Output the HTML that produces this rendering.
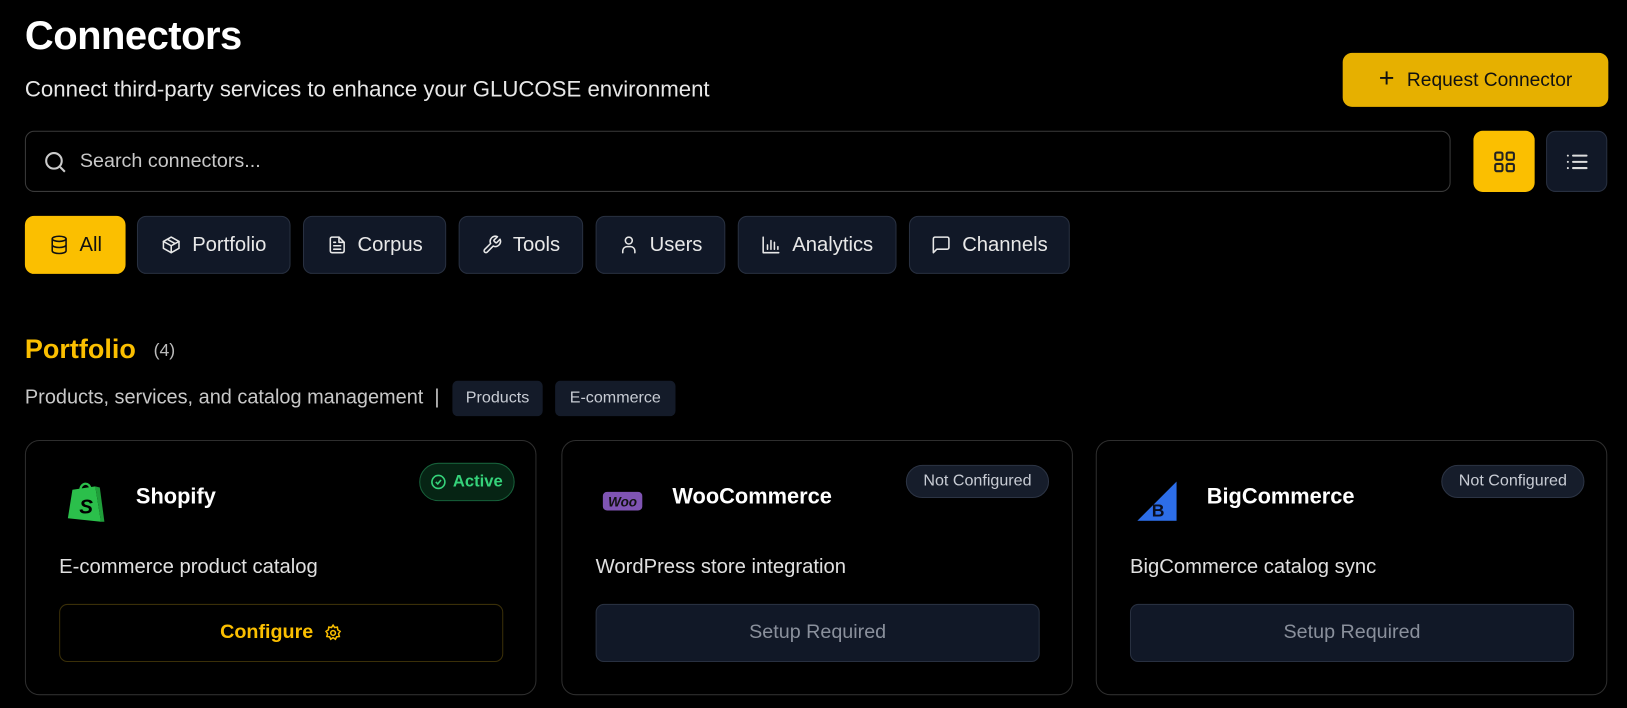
<!DOCTYPE html>
<html><head><meta charset="utf-8"><style>
*{box-sizing:border-box;margin:0;padding:0}
html,body{width:1627px;height:708px;background:#000;overflow:hidden}
body{color:#fff;font-family:"Liberation Sans",sans-serif;position:relative}
#w{position:absolute;left:0;top:0;width:1568px;height:682px;transform:scale(1.03763);transform-origin:0 0}
.a{position:absolute}
h1{position:absolute;left:24px;top:13px;font-size:38.5px;font-weight:700;letter-spacing:-0.5px}
.sub{left:24px;top:74px;font-size:21.4px;color:#e8e8e8}
.req{left:1294px;top:51px;width:256px;height:52px;background:#e6b000;border-radius:9px;color:#111;font-size:18.5px;display:flex;align-items:center;justify-content:center;gap:12px}
.search{left:24px;top:126px;width:1374px;height:59px;border:1px solid #3a3a3a;border-radius:9px;display:flex;align-items:center;padding-left:16px;gap:12px;color:#c8c8c8;font-size:19px}
.vb{top:126px;width:59px;height:59px;border-radius:9px;display:flex;align-items:center;justify-content:center}
.pill{top:208px;height:56px;border-radius:9px;background:#111827;border:1px solid #283040;display:flex;align-items:center;justify-content:center;gap:10px;font-size:19.5px;color:#e8e8e8}
.pill svg{width:20px;height:20px;fill:none;stroke:currentColor;stroke-width:1.8;stroke-linecap:round;stroke-linejoin:round}
.tag{top:367px;height:34px;background:#141b29;border-radius:5px;color:#c8ccd4;font-size:15.5px;display:flex;align-items:center;justify-content:center}
.card{top:424px;width:493px;height:246px;border:1px solid #2e2e2e;border-radius:14px}
.name{left:106px;top:42px;font-size:21px;font-weight:700}
.desc{left:32px;top:110px;font-size:19.5px;color:#e0e0e0}
.btn{left:32px;top:157px;width:428px;height:56px;border-radius:8px;display:flex;align-items:center;justify-content:center;font-size:19px}
.nc{top:23px;height:32px;border-radius:16px;background:#161d2b;border:1px solid #2c3444;color:#c8ccd4;font-size:15.5px;display:flex;align-items:center;justify-content:center}
</style></head><body><div id="w">
<h1>Connectors</h1>
<div class="a sub">Connect third-party services to enhance your GLUCOSE environment</div>
<div class="a req"><span style="font-size:26px;font-weight:300;margin-top:-3px">+</span>Request Connector</div>
<div class="a search"><svg width="24" height="24" viewBox="0 0 24 24" fill="none" stroke="#ccc" stroke-width="2"><circle cx="11" cy="11" r="7.5"/><path d="M17 17l4.5 4.5"/></svg>Search connectors...</div>
<div class="a vb" style="left:1420px;background:#fbbf00"><svg width="24" height="24" viewBox="0 0 24 24" fill="none" stroke="#222" stroke-width="2"><rect x="3" y="3" width="7" height="7" rx="1.5"/><rect x="14" y="3" width="7" height="7" rx="1.5"/><rect x="3" y="14" width="7" height="7" rx="1.5"/><rect x="14" y="14" width="7" height="7" rx="1.5"/></svg></div>
<div class="a vb" style="left:1490px;background:#111827;border:1px solid #283040"><svg width="24" height="24" viewBox="0 0 24 24" fill="none" stroke="#ddd" stroke-width="2" stroke-linecap="round"><path d="M8 6h13M8 12h13M8 18h13M3 6h.01M3 12h.01M3 18h.01"/></svg></div>

<div class="a pill" style="left:24px;width:97px;background:#fbbf00;border-color:#fbbf00;color:#111"><svg viewBox="0 0 24 24"><ellipse cx="12" cy="5" rx="8" ry="3"/><path d="M4 5v14c0 1.7 3.6 3 8 3s8-1.3 8-3V5M4 12c0 1.7 3.6 3 8 3s8-1.3 8-3"/></svg>All</div>
<div class="a pill" style="left:132px;width:148px"><svg viewBox="0 0 24 24"><path d="M21 8l-9-5-9 5v8l9 5 9-5z"/><path d="M3 8l9 5 9-5M12 13v8M7.5 5.5l9 5"/></svg>Portfolio</div>
<div class="a pill" style="left:292px;width:138px"><svg viewBox="0 0 24 24"><path d="M14 3H6a2 2 0 0 0-2 2v14a2 2 0 0 0 2 2h12a2 2 0 0 0 2-2V9z"/><path d="M14 3v6h6M8 13h8M8 17h8M8 9h2"/></svg>Corpus</div>
<div class="a pill" style="left:442px;width:120px"><svg viewBox="0 0 24 24"><path d="M14.7 6.3a1 1 0 0 0 0 1.4l1.6 1.6a1 1 0 0 0 1.4 0l3.8-3.8a6 6 0 0 1-7.9 7.9l-6.9 6.9a2.1 2.1 0 0 1-3-3l6.9-6.9a6 6 0 0 1 7.9-7.9z"/></svg>Tools</div>
<div class="a pill" style="left:574px;width:125px"><svg viewBox="0 0 24 24"><circle cx="12" cy="7" r="4"/><path d="M5 21v-2a5 5 0 0 1 5-5h4a5 5 0 0 1 5 5v2"/></svg>Users</div>
<div class="a pill" style="left:711px;width:153px"><svg viewBox="0 0 24 24"><path d="M3 3v18h18M8 17v-5M12 17V7M16 17v-8M20 17v-3"/></svg>Analytics</div>
<div class="a pill" style="left:876px;width:155px"><svg viewBox="0 0 24 24"><path d="M21 15a2 2 0 0 1-2 2H7l-4 4V5a2 2 0 0 1 2-2h14a2 2 0 0 1 2 2z"/></svg>Channels</div>

<div class="a" style="left:24px;top:321px;font-size:26px;font-weight:700;color:#fbbf00">Portfolio</div>
<div class="a" style="left:148px;top:328px;font-size:17px;color:#bbb">(4)</div>
<div class="a" style="left:24px;top:373px;font-size:19.2px;color:#c8c8c8">Products, services, and catalog management&nbsp;&nbsp;|</div>
<div class="a tag" style="left:436px;width:87px">Products</div>
<div class="a tag" style="left:535px;width:116px">E-commerce</div>

<div class="a card" style="left:24px">
 <svg class="a" style="left:38px;top:36px" width="40" height="44" viewBox="0 0 36 40"><path d="M6 10l20-3 5 31-29-3z" fill="#2bbf4b"/><path d="M26 7l4 1 4 30-3 0z" fill="#1f9e3a"/><path d="M13 10c0-6 8-8 9 0" fill="none" stroke="#2bbf4b" stroke-width="2"/><text x="12" y="31" font-family="Liberation Sans" font-weight="700" font-size="18" fill="#000" font-style="italic">S</text></svg>
 <div class="a name">Shopify</div>
 <div class="a" style="left:379px;top:21px;width:92px;height:37px;border-radius:19px;background:#062414;border:1px solid #17603a;color:#35d27a;font-size:16px;font-weight:700;display:flex;align-items:center;justify-content:center;gap:6px"><svg width="15" height="15" viewBox="0 0 24 24" fill="none" stroke="#35d27a" stroke-width="2.5"><circle cx="12" cy="12" r="10"/><path d="M8 12l3 3 5-6"/></svg>Active</div>
 <div class="a desc">E-commerce product catalog</div>
 <div class="a btn" style="border:1px solid #3a2f08;color:#fbbf00;font-weight:700;gap:10px">Configure <svg width="18" height="18" viewBox="0 0 24 24" fill="none" stroke="#fbbf00" stroke-width="2"><circle cx="12" cy="12" r="3"/><path d="M12 2l2 3 3.5-.5.5 3.5 3 2-2 3 1 3.5-3.5.5-1.5 3-3-2-3 2-1.5-3-3.5-.5 1-3.5-2-3 3-2 .5-3.5L10 5z"/></svg></div>
</div>
<div class="a card" style="left:541px">
 <div class="a" style="left:39px;top:49px;width:38px;height:18px;background:#7f54b3;border-radius:4px;color:#111;font-size:13px;font-weight:700;font-style:italic;display:flex;align-items:center;justify-content:center">Woo</div>
 <div class="a name">WooCommerce</div>
 <div class="a nc" style="left:331px;width:138px">Not Configured</div>
 <div class="a desc">WordPress store integration</div>
 <div class="a btn" style="background:#111827;border:1px solid #283040;color:#8a909c">Setup Required</div>
</div>
<div class="a card" style="left:1056px">
 <svg class="a" style="left:39px;top:39px" width="38" height="38" viewBox="0 0 38 38"><path d="M38 0v38H0z" fill="#2d6ee8"/><text x="14" y="34" font-family="Liberation Sans" font-weight="700" font-size="17" fill="#0a0f20">B</text></svg>
 <div class="a name">BigCommerce</div>
 <div class="a nc" style="left:332px;width:138px">Not Configured</div>
 <div class="a desc">BigCommerce catalog sync</div>
 <div class="a btn" style="background:#111827;border:1px solid #283040;color:#8a909c">Setup Required</div>
</div>
</div></body></html>
